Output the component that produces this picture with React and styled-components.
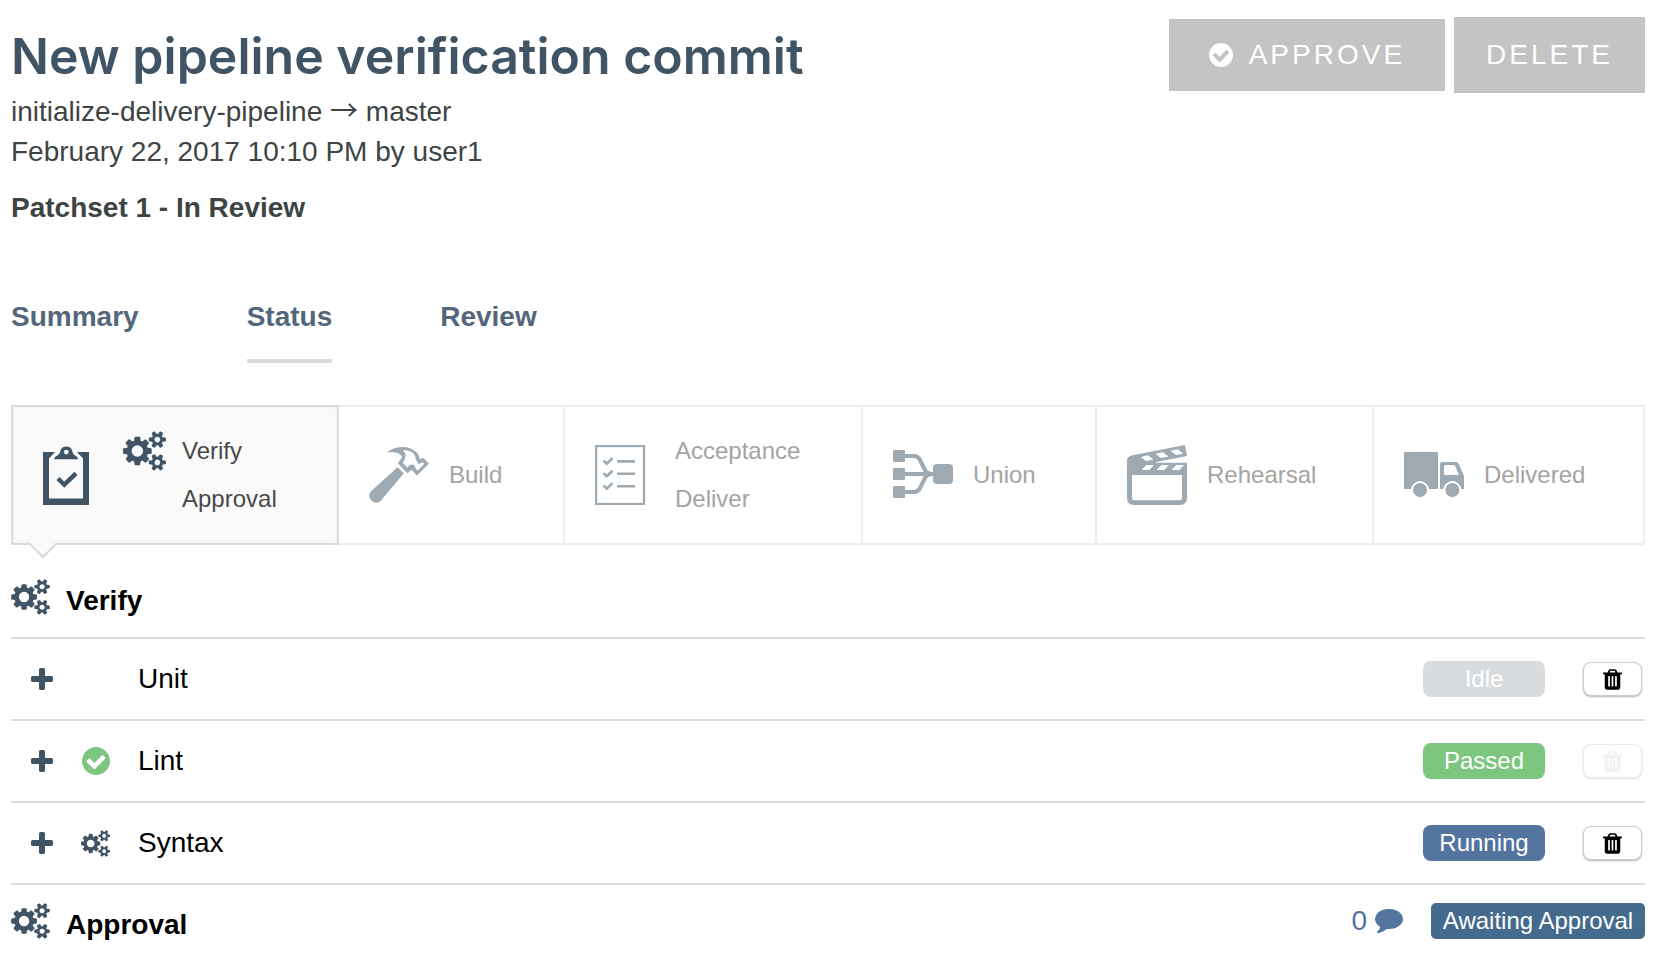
import React from "react";
import styled, { createGlobalStyle, css } from "styled-components";

const ink = "#405466";
const line = "#d8dbdf";
const blue = "#53749e";

const GlobalStyle = createGlobalStyle`
  *, *::before, *::after { box-sizing: border-box; }
  body {
    margin: 0;
    background: #fff;
    color: #000;
    font-family: "Liberation Sans", Arial, sans-serif;
    font-size: 28px;
    line-height: 40px;
  }
  h1, h2, p, ul, ol { margin: 0; padding: 0; }
  ul, ol { list-style: none; }
  button { font: inherit; padding: 0; margin: 0; border: 0; cursor: pointer; }
  svg { display: block; flex: none; }
`;

const Page = styled.main`
  padding: 17px 13px 0 11px;
`;

const Header = styled.header`
  display: flex;
  justify-content: space-between;
  align-items: flex-start;
  color: #3d4444;
`;

const Title = styled.h1`
  margin: 9px 0 6px;
  font-family: Inter, "Open Sans", sans-serif;
  font-size: 50px;
  font-weight: 600;
  line-height: 60px;
  color: ${ink};
`;

const Arrow = styled.span`
  font-family: "Noto Sans CJK SC", sans-serif;
  line-height: 1;
`;

const Patchset = styled.p`
  margin-top: 16px;
  font-weight: 700;
`;

const Actions = styled.div`
  display: flex;
  align-items: center;
  gap: 9px;
`;

const ActionButton = styled.button`
  display: flex;
  align-items: center;
  gap: 16px;
  height: ${(p) => (p.$tall ? 76 : 72)}px;
  padding: 0 ${(p) => (p.$tall ? 32 : 40)}px;
  background: #c4c4c4;
  color: #fff;
  letter-spacing: 3px;
  white-space: nowrap;
`;

const Tabs = styled.nav`
  display: flex;
  gap: 108px;
  margin: 69px 0 42px;
`;

const Tab = styled.a`
  padding-bottom: 22px;
  border-bottom: 4px solid ${(p) => (p.$active ? line : "transparent")};
  color: #546679;
  font-weight: 700;
  text-decoration: none;
`;

const Stages = styled.ol`
  display: grid;
  grid-template-columns: 326fr 226fr 298fr 234fr 277fr 269fr;
  border: 2px solid #eee;
`;

const Stage = styled.li`
  position: relative;
  display: flex;
  align-items: center;
  gap: 20px;
  min-height: 136px;
  padding: 0 0 0 30px;
  border-right: 2px solid #eee;
  color: #a4a4a4;
  font-size: 24px;
  line-height: 48px;

  &:last-child { border-right: 0; }

  > svg { color: #9fa9b2; }

  ${(p) =>
    p.$active &&
    css`
      margin: -2px 0 -2px -2px;
      border: 2px solid ${line};
      background: #fafafa;
      box-shadow: inset 0 0 4px rgba(0, 0, 0, 0.06);
      color: #484848;
      > svg { color: ${ink}; }
    `}
`;

const Pointer = styled.span`
  position: absolute;
  left: 16px;
  top: 100%;
`;

const Steps = styled.ul`
  display: grid;
`;

const Step = styled.li`
  display: grid;
  grid-template-columns: ${(p) => (p.$slot ? "43px auto" : "auto")};
  column-gap: 16px;
  align-items: center;
  svg { color: ${ink}; }
`;

const StepName = styled.span`
  grid-column: -2;
`;

const SectionHead = styled.div`
  display: flex;
  align-items: flex-start;
  padding-top: 18px;

  > svg { color: ${ink}; }
`;

const FirstSection = styled(SectionHead)`
  margin-top: 16px;
  padding-bottom: 18px;
`;

const SectionTitle = styled.h2`
  flex: 1;
  padding-top: 4px;
  margin-left: 16px;
  font-size: 28px;
  line-height: 36px;
  font-weight: 700;
`;

const Checks = styled.ul`
  border-bottom: 2px solid ${line};
`;

const Check = styled.li`
  display: flex;
  align-items: center;
  gap: 28px;
  min-height: 82px;
  padding: 0 3px 0 20px;
  border-top: 2px solid ${line};
`;

const ExpandButton = styled.button`
  background: none;
  color: ${ink};
`;

const StateIcon = styled.span`
  display: flex;
  justify-content: center;
  width: 29px;
  color: ${(p) => (p.$ok ? "#7dc67f" : ink)};
`;

const CheckName = styled.span`
  flex: 1;
`;

const badgeColors = { Idle: "#d8dcdf", Passed: "#7dc67f", Running: blue };

const Badge = styled.span`
  width: ${(p) => (p.$wide ? 214 : 122)}px;
  border-radius: ${(p) => (p.$wide ? 5 : 8)}px;
  background: ${(p) => p.$bg};
  color: #fff;
  font-size: 24px;
  line-height: 36px;
  text-align: center;
  white-space: nowrap;
`;

const TrashButton = styled.button`
  display: flex;
  align-items: center;
  justify-content: center;
  width: 59px;
  height: 34px;
  margin-left: 10px;
  border: 1px solid #ccc;
  border-radius: 8px;
  background: #fff;
  color: #000;
  box-shadow: 0 1px 2px rgba(0, 0, 0, 0.3);

  &:disabled {
    opacity: 0.4;
    cursor: default;
    svg { color: #ddd; }
  }
`;

const Comments = styled.a`
  display: flex;
  align-items: center;
  gap: 8px;
  margin-right: 28px;
  color: ${blue};
  line-height: 36px;
  text-decoration: none;
`;

const ApprovalState = styled.div`
  display: flex;
  align-items: center;
`;

function Glyph({ box, width, height, d }) {
  return (
    <svg width={width} height={height} viewBox={box} fill="currentColor" aria-hidden="true">
      <path d={d} />
    </svg>
  );
}

const smallCog =
  "v140q0 16-149 31-12 27-30 52 51 113 51 138 0 4-4 7-122 71-124 71-8 0-46-47t-52-68q-20 2-30 2t-30-2q-14 21-52 68t-46 47q-2 0-124-71-4-3-4-7 0-25 51-138-18-25-30-52-149-15-149-31v-140q0-16 149-31 13-29 30-52-51-113-51-138 0-4 4-7 4-2 35-20t59-34 30-16q8 0 46 46.5t52 67.5q20-2 30-2t30 2q51-71 92-112l6-2q4 0 124 70 4 3 4 7 0 25-51 138 17 23 30 52 149 15 149 31z";

const Cogs = ({ width, height }) => (
  <Glyph
    box="0 0 1920 1792"
    width={width}
    height={height}
    d={
      "M896 896q0-106-75-181t-181-75-181 75-75 181 75 181 181 75 181-75 75-181zm768 512q0-52-38-90t-90-38-90 38-38 90q0 53 37.5 90.5t90.5 37.5 90.5-37.5 37.5-90.5zm0-1024q0-52-38-90t-90-38-90 38-38 90q0 53 37.5 90.5t90.5 37.5 90.5-37.5 37.5-90.5zm-384 421v185q0 10-7 19.5t-16 10.5l-155 24q-11 35-32 76 34 48 90 115 7 10 7 20 0 12-7 19-23 30-82.5 89.5t-78.5 59.5q-11 0-21-7l-115-90q-37 19-77 31-11 108-23 155-7 24-30 24h-186q-11 0-20-7.5t-10-17.5l-23-153q-34-10-75-31l-118 89q-7 7-20 7-11 0-21-8-144-133-144-160 0-9 7-19 10-14 41-53t47-61q-23-44-35-82l-152-24q-10-1-17-9.5t-7-19.5v-185q0-10 7-19.5t16-10.5l155-24q11-35 32-76-34-48-90-115-7-11-7-20 0-12 7-20 22-30 82-89t79-59q11 0 21 7l115 90q34-18 77-32 11-108 23-154 7-24 30-24h186q11 0 20 7.5t10 17.5l23 153q34 10 75 31l118-89q8-7 20-7 11 0 21 8 144 133 144 160 0 9-7 19-12 16-42 54t-45 60q23 48 34 82l152 23q10 2 17 10.5t7 19.5zM1920 1338" +
      smallCog +
      "M1920 314" +
      smallCog
    }
  />
);

const CheckCircle = ({ size }) => (
  <Glyph
    box="128 128 1536 1536"
    width={size}
    height={size}
    d="M1412 734q0-28-18-46l-91-90q-19-19-45-19t-45 19l-408 407-226-226q-19-19-45-19t-45 19l-91 90q-18 18-18 46 0 27 18 45l362 362q19 19 45 19 27 0 46-19l543-543q18-18 18-45zm252 162q0 209-103 385.5t-279.5 279.5-385.5 103-385.5-103-279.5-279.5-103-385.5 103-385.5 279.5-279.5 385.5-103 385.5 103 279.5 279.5 103 385.5z"
  />
);

const Plus = () => (
  <Glyph
    box="192 128 1408 1408"
    width={22}
    height={22}
    d="M1600 736v192q0 40-28 68t-68 28h-416v416q0 40-28 68t-68 28h-192q-40 0-68-28t-28-68v-416h-416q-40 0-68-28t-28-68v-192q0-40 28-68t68-28h416v-416q0-40 28-68t68-28h192q40 0 68 28t28 68v416h416q40 0 68 28t28 68z"
  />
);

const Trash = () => (
  <Glyph
    box="192 128 1408 1536"
    width={19}
    height={21}
    d="M704 1376v-704q0-14-9-23t-23-9h-64q-14 0-23 9t-9 23v704q0 14 9 23t23 9h64q14 0 23-9t9-23zm256 0v-704q0-14-9-23t-23-9h-64q-14 0-23 9t-9 23v704q0 14 9 23t23 9h64q14 0 23-9t9-23zm256 0v-704q0-14-9-23t-23-9h-64q-14 0-23 9t-9 23v704q0 14 9 23t23 9h64q14 0 23-9t9-23zm-544-992h448l-48-117q-7-9-17-11h-317q-10 2-17 11zm928 32v64q0 14-9 23t-23 9h-96v948q0 83-47 143.5t-113 60.5h-832q-66 0-113-58.5t-47-141.5v-952h-96q-14 0-23-9t-9-23v-64q0-14 9-23t23-9h309l70-167q15-37 54-63t79-26h320q40 0 79 26t54 63l70 167h309q14 0 23 9t9 23z"
  />
);

const Comment = () => (
  <Glyph
    box="0 128 1792 1792"
    width={28}
    height={28}
    d="M1792 896q0 174-120 321.5t-326 233-450 85.5q-70 0-145-8-198 175-460 242-49 14-114 22-17 2-30.5-9t-17.5-29v-1q-3-4-.5-12t2-10 4.5-9.5l6-9 7-8.5 8-9q7-8 31-34.5t34.5-38 31-39.5 32.5-51 27-59 26-76q-157-89-247.5-220t-90.5-281q0-174 120-321.5t326-233 450-85.5 450 85.5 326 233 120 321.5z"
  />
);

function StageSvg({ children }) {
  return (
    <svg width="60" height="60" viewBox="0 0 60 60" fill="currentColor" aria-hidden="true">
      {children}
    </svg>
  );
}

const ClipboardIcon = () => (
  <StageSvg>
    <path d="M0 7H12L6 13.5V53.5H40V13.5L34 7H46V60H0Z" />
    <path
      fillRule="evenodd"
      d="M11 14.3C11.5 10.5 17 10.5 17.2 6.5A6.2 6.2 0 0 1 29.4 6.5C29.6 10.5 34.5 10.5 35.3 14.3ZM23.3 4.7A2.4 2.4 0 1 0 23.3 9.5A2.4 2.4 0 1 0 23.3 4.7Z"
    />
    <path d="M15 33.5L21.3 39.7L33 28.3" fill="none" stroke="currentColor" strokeWidth="4.4" />
  </StageSvg>
);

const HammerIcon = () => (
  <StageSvg>
    <path d="M28.5 22.3L34.8 28.3L12 55.5Q7 60 2.5 55.5Q-2 51 2 46.3Z" />
    <path
      fillRule="evenodd"
      d="M18 7.5C25 1.5 37 .5 43 4.3C47 6.8 50.5 9 50.6 14.2L54.3 12.8L60 18.6L48 30.5L43.8 26.3L43 24.5L38.5 28.2L28.8 18.3L33 12.3C32.5 8.5 26 6.5 18 7.5ZM33.5 5.4C37 7 38 12 33.8 17.7L38.3 22.7C41 18.5 46 18.5 46.5 23.3L48.5 25.7L55.3 18.8L53.7 17.3L49.5 19L46.8 14.5C47 8.5 41 4.5 33.5 5.4Z"
    />
  </StageSvg>
);

const ChecklistIcon = () => (
  <StageSvg>
    <g fill="none" stroke="currentColor">
      <rect x="1" y="1" width="48" height="58" strokeWidth="2.3" />
      {[0, 12.4, 24.8].map((dy) => (
        <path
          key={dy}
          strokeWidth="2.6"
          d={`M8.5 ${15.7 + dy}L11.7 ${18.8 + dy}L17.5 ${13.3 + dy}M22.2 ${16.4 + dy}H40`}
        />
      ))}
    </g>
  </StageSvg>
);

const UnionIcon = () => (
  <StageSvg>
    <rect x="0" y="5" width="12" height="12" rx="1" />
    <rect x="0" y="23" width="12" height="12" rx="1" />
    <rect x="0" y="41" width="12" height="12" rx="1" />
    <rect x="40" y="19" width="20" height="20" rx="4" />
    <path
      fill="none"
      stroke="currentColor"
      strokeWidth="4"
      d="M12 11H21Q25 11 27 15L32 25Q34 29 40 29M12 29H40M12 47H21Q25 47 27 43L32 33Q34 29 40 29"
    />
  </StageSvg>
);

const ClapperIcon = () => (
  <StageSvg>
    <path
      fillRule="evenodd"
      d="M0 16Q0 11.5 4.5 10.5L57.8 0L60 11L29 17V17.7H60V53Q60 60 53 60H7Q0 60 0 53ZM5 30V53Q5 55.2 7.2 55.2H52.8Q55 55.2 55 53V30ZM13.7 12L21 10.3L26.5 14.5L19.2 16ZM28.5 8.8L35.8 7.3L41.5 11.5L34 13ZM43.3 5.8L50.6 4.3L56.3 8.5L49 10ZM19.3 20H27L22.3 25H14.5ZM34.3 20H42L37.3 25H29.5ZM49.3 20H57L52.3 25H44.5Z"
    />
  </StageSvg>
);

const TruckIcon = () => (
  <StageSvg>
    <rect x="0" y="7" width="34" height="37" rx="1" />
    <path
      fillRule="evenodd"
      d="M38 17H52Q53.8 17 54.8 19L60 31V44H37Q36 44 36 43V19Q36 17 38 17ZM41.5 20Q40 20 40 21.5V28.5Q40 30 41.5 30H54.8L51.5 21.5Q51 20 49.5 20Z"
    />
    <circle cx="16" cy="45" r="9" fill="#fff" />
    <circle cx="48.3" cy="45" r="9" fill="#fff" />
    <circle cx="16" cy="45" r="7" />
    <circle cx="48.3" cy="45" r="7" />
  </StageSvg>
);

const stages = [
  { Icon: ClipboardIcon, steps: ["Verify", "Approval"], active: true },
  { Icon: HammerIcon, steps: ["Build"] },
  { Icon: ChecklistIcon, steps: ["Acceptance", "Deliver"] },
  { Icon: UnionIcon, steps: ["Union"] },
  { Icon: ClapperIcon, steps: ["Rehearsal"] },
  { Icon: TruckIcon, steps: ["Delivered"] },
];

const checks = [
  { name: "Unit", state: "Idle" },
  { name: "Lint", state: "Passed" },
  { name: "Syntax", state: "Running" },
];

export default function App() {
  return (
    <>
      <GlobalStyle />
      <Page>
        <Header>
          <div>
            <Title>New pipeline verification commit</Title>
            <p>
              initialize-delivery-pipeline <Arrow>→</Arrow> master
            </p>
            <p>February 22, 2017 10:10 PM by user1</p>
            <Patchset>Patchset 1 - In Review</Patchset>
          </div>
          <Actions>
            <ActionButton type="button">
              <CheckCircle size={24} />
              <span>APPROVE</span>
            </ActionButton>
            <ActionButton type="button" $tall>
              DELETE
            </ActionButton>
          </Actions>
        </Header>

        <Tabs>
          <Tab href="#summary">Summary</Tab>
          <Tab href="#status" $active aria-current="page">
            Status
          </Tab>
          <Tab href="#review">Review</Tab>
        </Tabs>

        <Stages>
          {stages.map(({ Icon, steps, active }) => (
            <Stage key={steps[0]} $active={active}>
              <Icon />
              <Steps>
                {steps.map((step, i) => (
                  <Step key={step} $slot={active}>
                    {active && i === 0 && <Cogs width={43} height={40} />}
                    <StepName>{step}</StepName>
                  </Step>
                ))}
              </Steps>
              {active && (
                <Pointer>
                  <svg width="28" height="16" viewBox="0 0 28 16" overflow="visible" aria-hidden="true">
                    <path d="M1 -1H27V1L14 14L1 1Z" fill="#fafafa" />
                    <path d="M0 0L14 14L28 0" fill="none" stroke={line} strokeWidth="2" />
                  </svg>
                </Pointer>
              )}
            </Stage>
          ))}
        </Stages>

        <FirstSection>
          <Cogs width={39} height={36} />
          <SectionTitle>Verify</SectionTitle>
        </FirstSection>

        <Checks>
          {checks.map(({ name, state }) => (
            <Check key={name}>
              <ExpandButton type="button" aria-label={`Expand ${name}`}>
                <Plus />
              </ExpandButton>
              <StateIcon $ok={state === "Passed"}>
                {state === "Passed" && <CheckCircle size={28} />}
                {state === "Running" && <Cogs width={29} height={27} />}
              </StateIcon>
              <CheckName>{name}</CheckName>
              <Badge $bg={badgeColors[state]}>{state}</Badge>
              <TrashButton type="button" aria-label={`Cancel ${name}`} disabled={state === "Passed"}>
                <Trash />
              </TrashButton>
            </Check>
          ))}
        </Checks>

        <SectionHead>
          <Cogs width={39} height={36} />
          <SectionTitle>Approval</SectionTitle>
          <ApprovalState>
            <Comments href="#comments">
              0 <Comment />
            </Comments>
            <Badge $wide $bg="#446a8e">
              Awaiting Approval
            </Badge>
          </ApprovalState>
        </SectionHead>
      </Page>
    </>
  );
}
